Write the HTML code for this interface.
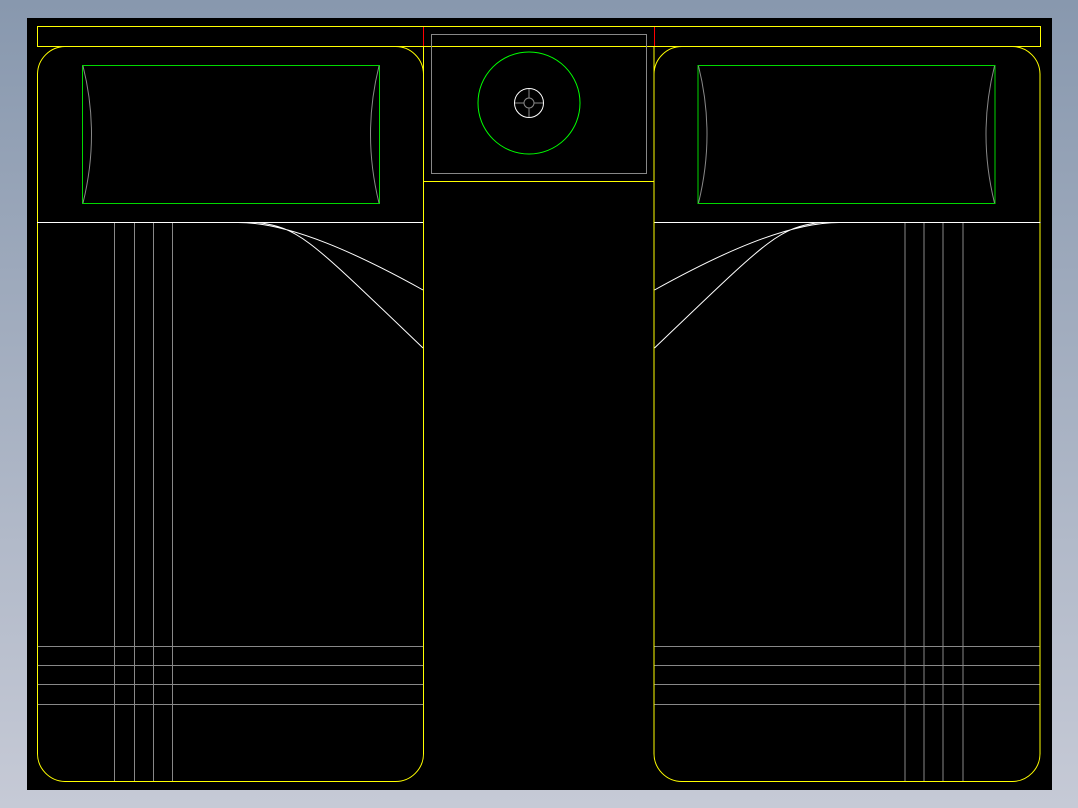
<!DOCTYPE html>
<html><head><style>
html,body{margin:0;padding:0;}
body{width:1078px;height:808px;background:linear-gradient(#8898ae,#c6cad6);overflow:hidden;}
svg{position:absolute;left:0;top:0;}
</style></head><body>
<svg width="1078" height="808" viewBox="0 0 1078 808" shape-rendering="crispEdges">
<rect x="27" y="18" width="1025" height="772" fill="#000"/>
<g fill="none" stroke-width="1">
<rect x="37.5" y="26.5" width="1003" height="20" stroke="#ff0"/>
<g id="bed">
<path d="M37.5 74 A28 28 0 0 1 65 46.5 M395 46.5 A28 28 0 0 1 423.5 74 M37.5 74 V753 A28 28 0 0 0 65 781.5 H395 A28 28 0 0 0 423.5 753 V46" stroke="#ff0" shape-rendering="auto"/>
<rect x="82.5" y="65.5" width="297" height="138" stroke="#0f0" stroke-opacity="0.85"/>
<path d="M83 66 Q100 134 83 203 M379 66 Q362 134 379 203" stroke="#888" shape-rendering="auto"/>
<line x1="37" y1="222.5" x2="423" y2="222.5" stroke="#fff"/>
<path d="M237 222.5 C290 222 360 255 423 290 M258 222.5 C300 228 310 240 423 348" stroke="#fff" shape-rendering="auto"/>
<path d="M114.5 223 V781 M134.5 223 V781 M153.5 223 V781 M172.5 223 V781 M38 646.5 H423 M38 665.5 H423 M38 684.5 H423 M38 704.5 H423" stroke="#888"/>
</g>
<use href="#bed" transform="translate(1077.5,0) scale(-1,1)"/>
<line x1="423.5" y1="27" x2="423.5" y2="46" stroke="#f00"/>
<line x1="654.5" y1="27" x2="654.5" y2="46" stroke="#f00"/>
<line x1="423" y1="181.5" x2="654" y2="181.5" stroke="#ff0"/>
<rect x="431.5" y="34.5" width="215" height="139" stroke="#888"/>
<g shape-rendering="auto">
<circle cx="529" cy="103" r="51" stroke="#0f0"/>
<circle cx="529" cy="103" r="14.5" stroke="#fff"/>
<circle cx="529" cy="103" r="5" stroke="#888"/>
<path d="M529 89 V98 M529 108 V117 M515 103 H524 M534 103 H543" stroke="#888"/>
</g>
</g>
</svg>
</body></html>
